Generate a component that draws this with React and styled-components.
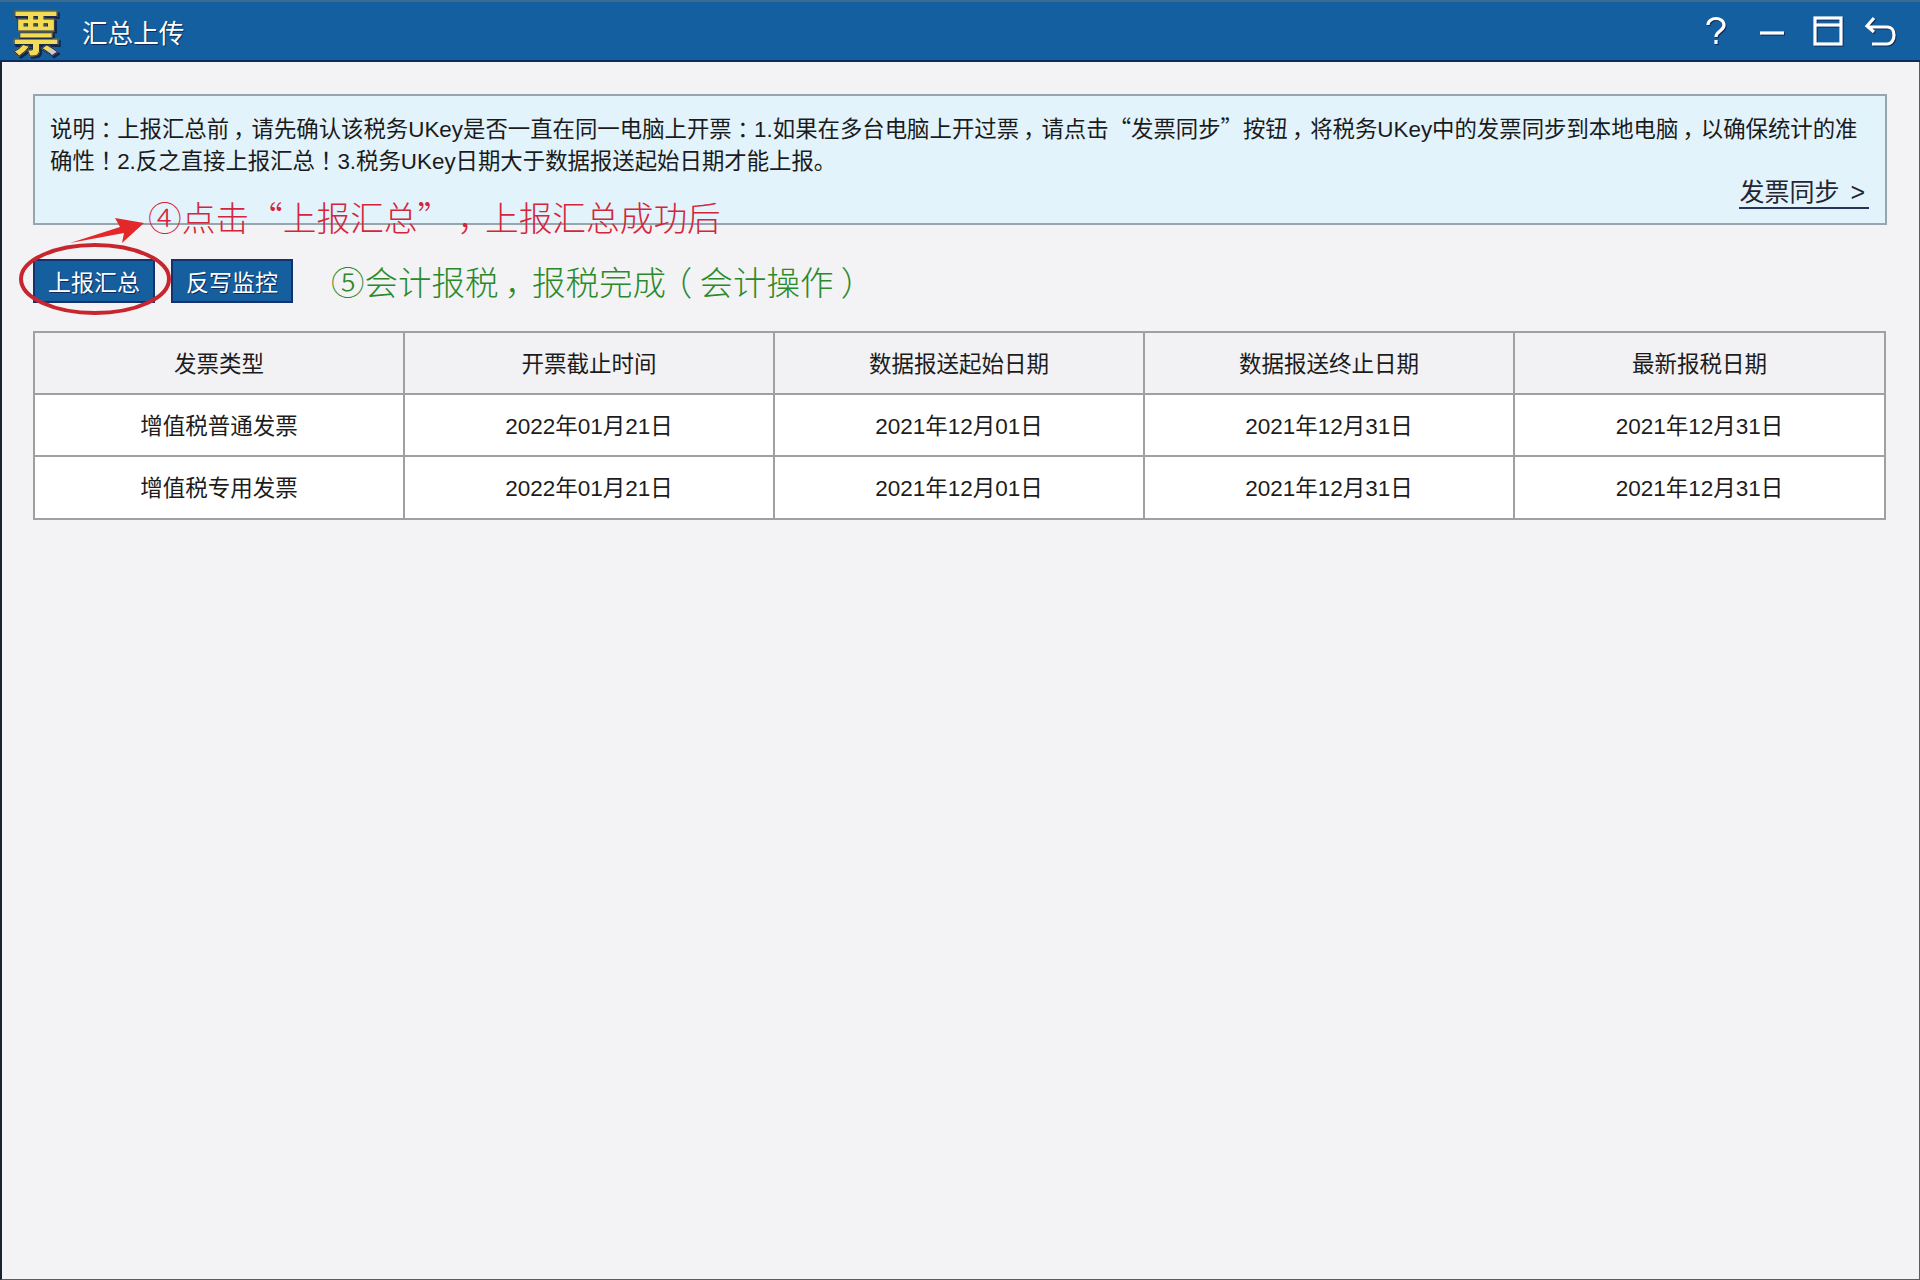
import React from 'react';
import styled, { createGlobalStyle } from 'styled-components';

const Global = createGlobalStyle`
  html, body { margin: 0; padding: 0; background: #f3f2f5; }
  body { font-family: "Liberation Sans", "Noto Sans CJK SC", sans-serif; }
`;
const Page = styled.div`
  position: relative; width: 1920px; height: 1280px; box-sizing: border-box;
  background: #f3f2f5; border-left: 2px solid #1d2230; border-right: 1px solid #555b68;
  border-bottom: 1px solid #555b68; display: flex; flex-direction: column;
`;
const Punct = styled.span`
  display: inline-block; width: 1em; text-align: center; line-height: 0;
  font-family: "Noto Sans CJK SC", sans-serif; font-feature-settings: "palt";
`;
const Quote = styled.span`
  line-height: 0; font-family: "Noto Sans CJK SC", sans-serif;
`;
const TitleBar = styled.header`
  height: 62px; flex: none; box-sizing: border-box; margin-left: -2px; margin-right: -1px;
  background: #135f9f; border-top: 2px solid #3e6a8d; border-bottom: 2px solid #0d2a5c;
  display: flex; align-items: center; padding: 0 24px 0 12px;
`;
const Logo = styled.span`
  width: 52px; height: 56px; flex: none; font-family: "Noto Sans CJK SC", sans-serif;
  font-size: 48px; line-height: 54px; font-weight: 900; color: transparent;
  background: linear-gradient(to bottom right, #f3dc55 74%, #c9ccd2 82%);
  -webkit-background-clip: text; background-clip: text;
  -webkit-text-stroke: 1px #1a2a4c; filter: drop-shadow(2px 2px 0 #12264f);
`;
const Title = styled.h1`
  margin: 0 0 0 18px; font-size: 25.6px; font-weight: 400; color: #fff; flex: 1;
  font-family: "Noto Sans CJK SC", sans-serif; text-shadow: 1px 1px 0 #0d2a5c;
`;
const Tools = styled.div`display: flex; align-items: center; gap: 26px;`;
const Tool = styled.svg`
  width: 30px; height: 30px; fill: none; stroke: #fff; stroke-width: 3.2; display: block;
  filter: drop-shadow(1px 1px 0 #0d2a5c);
`;
const BackTool = styled(Tool)`margin-left: -5px; width: 32px;`;
const Content = styled.main`padding: 32px 32px 0 31px; display: flex; flex-direction: column;`;
const Notice = styled.section`
  position: relative; height: 131px; box-sizing: border-box; background: #e2f3fb; border: 2px solid #96a6ac;
  padding: 18px 15px 0 15px; font-size: 22.4px; line-height: 32px; color: #1b1b1b;
`;
const Sync = styled.a`
  position: absolute; right: 16px; bottom: 14px; padding-right: 4px; font-size: 25px; line-height: 30px; color: #25252f;
  border-bottom: 2px solid #2c3358; word-spacing: 4px; white-space: pre;
`;
const Actions = styled.div`display: flex; align-items: center; gap: 16px; margin-top: 34px; height: 44px;`;
const Action = styled.button`
  width: 122px; height: 44px; padding: 0; background: #155f9e; color: #fff; font: inherit; font-size: 23px;
  font-family: "Noto Sans CJK SC", sans-serif;
  border: 2px solid #15326f; white-space: nowrap; text-shadow: 1px 1px 0 #0d2a5c;
`;
const GreenNote = styled.span`
  margin-left: 22px; font-size: 33.5px; line-height: 44px; font-weight: 300; color: #2a8a2a; white-space: nowrap;
  font-family: "Noto Sans CJK SC", sans-serif;
`;
const RedNote = styled.span`
  position: absolute; left: 146px; top: 193px; font-size: 33.7px; line-height: 48px; font-weight: 300; color: #d4263a; white-space: nowrap;
  font-family: "Noto Sans CJK SC", sans-serif;
`;
const Mark = styled.svg`position: absolute; left: 0; top: 200px; width: 200px; height: 130px; overflow: visible;`;
const Table = styled.table`
  margin-top: 28px; width: 1853px; border-collapse: collapse; table-layout: fixed; background: #fff;
  th, td { border: 2px solid #a0a0a0; text-align: center; font-size: 22.5px; font-weight: 400; color: #1c1c1c; height: 58.2px; padding: 0 0 2px; box-sizing: content-box; }
  th { background: #f2f1f3; width: 368px; }
  th:last-child { width: auto; }
`;

const heads = ['发票类型', '开票截止时间', '数据报送起始日期', '数据报送终止日期', '最新报税日期'];
const rows = ['增值税普通发票', '增值税专用发票'];

// full-width punctuation sits mid-cell in the reference; curly quotes keep the CJK face
function Mixed({ children }) {
  return children.split(/([，：！（）“”])/).map((part, i) => {
    if (i % 2 === 0) return part;
    return part === '“' || part === '”'
      ? <Quote key={i}>{part}</Quote>
      : <Punct key={i}>{part}</Punct>;
  });
}

export default function App() {
  return (
    <Page>
      <Global />
      <TitleBar>
        <Logo>票</Logo>
        <Title>汇总上传</Title>
        <Tools>
          <Tool viewBox="0 0 30 30"><path d="M7 9c0-4 4-6.500 8-6.500s8 2.500 8 6.500c0 6-8 6-8 12" /><path d="M15 24v4" /></Tool>
          <Tool viewBox="0 0 30 30"><path d="M3 17h24" /></Tool>
          <Tool viewBox="0 0 30 30"><rect x="2" y="2" width="26" height="26" /><path d="M2 9h26" /></Tool>
          <BackTool viewBox="0 0 32 30"><path d="M10 2L3 10l7 6M3 11h20c5 0 7 4 7 8s-2 9-7 9H8" /></BackTool>
        </Tools>
      </TitleBar>
      <Content>
        <Notice>
          <Mixed>说明：上报汇总前，请先确认该税务UKey是否一直在同一电脑上开票：1.如果在多台电脑上开过票，请点击“发票同步”按钮，将税务UKey中的发票同步到本地电脑，以确保统计的准确性！2.反之直接上报汇总！3.税务UKey日期大于数据报送起始日期才能上报。</Mixed>
          <Sync>发票同步 &gt;</Sync>
        </Notice>
        <Actions>
          <Action>上报汇总</Action>
          <Action>反写监控</Action>
          <GreenNote><Mixed>⑤会计报税，报税完成（会计操作）</Mixed></GreenNote>
        </Actions>
        <Table>
          <thead><tr>{heads.map(h => <th key={h}>{h}</th>)}</tr></thead>
          <tbody>
            {rows.map(r => (
              <tr key={r}>
                <td>{r}</td><td>2022年01月21日</td><td>2021年12月01日</td><td>2021年12月31日</td><td>2021年12月31日</td>
              </tr>
            ))}
          </tbody>
        </Table>
      </Content>
      <RedNote><Mixed>④点击“上报汇总”，上报汇总成功后</Mixed></RedNote>
      <Mark viewBox="0 0 200 130">
        <ellipse cx="93" cy="79" rx="74" ry="34" fill="none" stroke="#c8262e" strokeWidth="4" />
        <path d="M68 43 L118 27 L113 18 L142 23 L120 43 L122 33 Z" fill="#e3282a" />
      </Mark>
    </Page>
  );
}
